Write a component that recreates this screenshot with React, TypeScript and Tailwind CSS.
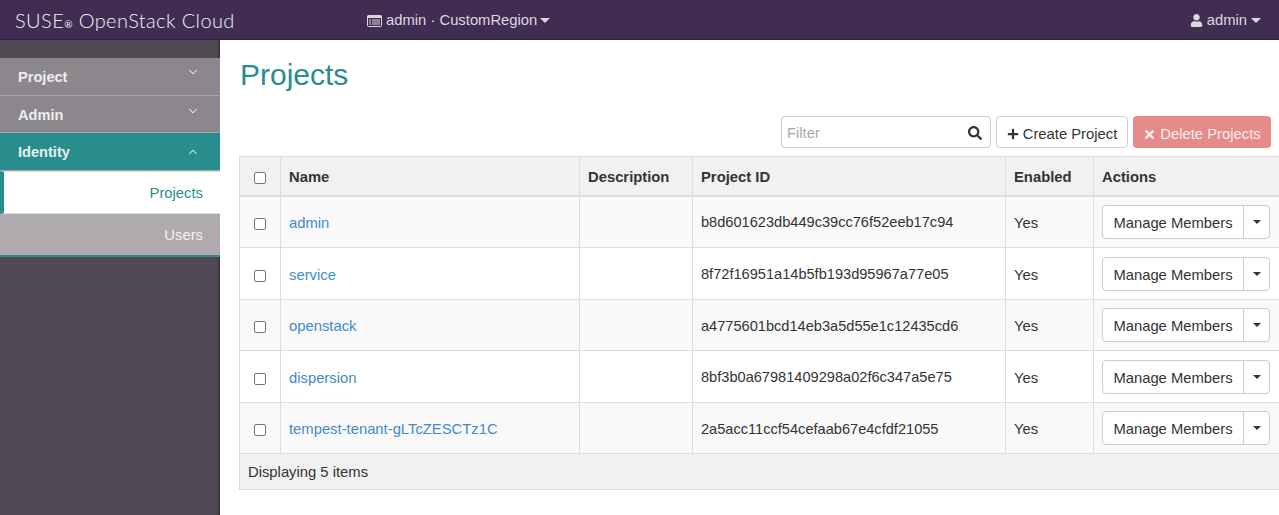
import { FaUser, FaPlus, FaTimes, FaSearch } from "react-icons/fa";
import { ChevronDown, ChevronUp } from "lucide-react";

const projects = [
  { name: "admin", id: "b8d601623db449c39cc76f52eeb17c94", rowClass: "h-[52px] bg-[#f9f9f9]" },
  { name: "service", id: "8f72f16951a14b5fb193d95967a77e05", rowClass: "h-[52px] bg-white" },
  { name: "openstack", id: "a4775601bcd14eb3a5d55e1c12435cd6", rowClass: "h-[51px] bg-[#f9f9f9]" },
  { name: "dispersion", id: "8bf3b0a67981409298a02f6c347a5e75", rowClass: "h-[52px] bg-white" },
  { name: "tempest-tenant-gLTcZESCTz1C", id: "2a5acc11ccf54cefaab67e4cfdf21055", rowClass: "h-[51px] bg-[#f9f9f9]" },
];

const NavCaret = ({ className }: { className: string }) => (
  <span className={`inline-block h-0 w-0 border-x-[5px] border-t-[5px] border-x-transparent border-t-[#dcd8df] ${className}`} />
);

const Checkbox = () => (
  <span className="mx-auto block h-3 w-3 rounded-[2px] border border-[#767676] bg-white" />
);

const RegionIcon = () => (
  <svg width="15" height="12" viewBox="0 0 15 12" className="mr-[4px] text-[#dcd8df]" fill="none">
    <rect x="0.5" y="0.5" width="14" height="11" rx="1" stroke="currentColor" />
    <rect x="0.5" y="0.5" width="14" height="2.5" fill="currentColor" />
    <path d="M2 5h2M5 5h8M2 7h2M5 7h8M2 9h2M5 9h8" stroke="currentColor" />
  </svg>
);

const TopBar = () => (
  <header className="flex h-10 shrink-0 items-center border-b border-[#2e2238] bg-[#412d52] pr-[18px] text-[#dcd8df]">
    <div className="ml-[15px] flex w-[352px] items-baseline font-['Lato',sans-serif] text-[20px] font-light leading-none tracking-[0.4px] text-[#f4f2f6]">
      SUSE<span className="text-[10px] font-normal">®</span>&nbsp;OpenStack Cloud
    </div>
    <div className="flex items-center pt-[2px] text-[14.8px]">
      <RegionIcon />
      <span>admin · CustomRegion</span>
      <NavCaret className="ml-[3px]" />
    </div>
    <div className="ml-auto flex items-center pt-[2px] text-[14.8px]">
      <FaUser className="mr-[4px] text-[13px]" />
      <span>admin</span>
      <NavCaret className="ml-[4px]" />
    </div>
  </header>
);

const Sidebar = () => (
  <aside className="w-[220px] shrink-0 bg-[#4f4a56] pt-[18px] text-[14.6px] shadow-[inset_-3px_0_3px_-2px_rgba(0,0,0,0.5)]">
    <div className="flex h-[38px] justify-between border-b border-[#aba7ac] bg-[#8b878c] pl-[18px] pr-[20px] pt-[9px] font-bold text-[#eeeeee]">
      <span>Project</span>
      <ChevronDown size={14} strokeWidth={1.75} className="-mt-[2px]" />
    </div>
    <div className="flex h-[37px] justify-between border-b border-[#a9a5aa] bg-[#8b878c] pl-[18px] pr-[20px] pt-[9px] font-bold text-[#eeeeee]">
      <span>Admin</span>
      <ChevronDown size={14} strokeWidth={1.75} className="-mt-[1px]" />
    </div>
    <div className="flex h-[38px] justify-between border-b border-[#a9a5aa] bg-[#2a8d8d] pl-[18px] pr-[20px] pt-[9px] font-bold text-[#e3f0f0]">
      <span>Identity</span>
      <ChevronUp size={14} strokeWidth={1.75} className="mt-[3px]" />
    </div>
    <div className="flex h-[43px] items-center justify-end border-y border-[#dddddd] border-l-4 border-l-[#2a8d8d] bg-white pr-[17px] pt-[2px] text-[14.8px] text-[#2a8d8d]">
      Projects
    </div>
    <div className="flex h-[43px] items-center justify-end border-b-2 border-[#2a8d8d] bg-[#aeaaae] pr-[17px] pt-[2px] text-[14.8px] font-medium text-[#f2f2f2]">
      Users
    </div>
  </aside>
);

const ProjectsTable = () => (
  <table className="w-[1040px] table-fixed border-collapse border border-[#dddddd] text-[14.8px] text-[#333333]">
    <colgroup>
      <col className="w-[41px]" />
      <col className="w-[299px]" />
      <col className="w-[113px]" />
      <col className="w-[313px]" />
      <col className="w-[88px]" />
      <col className="w-[186px]" />
    </colgroup>
    <thead>
      <tr className="h-[39px] border-b-2 border-[#dddddd] bg-[#f1f1f1] text-left font-bold">
        <th className="border-r border-[#dddddd] pt-[4px]"><Checkbox /></th>
        <th className="border-r border-[#dddddd] px-2 pt-[3px]">Name</th>
        <th className="border-r border-[#dddddd] px-2 pt-[3px]">Description</th>
        <th className="border-r border-[#dddddd] px-2 pt-[3px]">Project ID</th>
        <th className="border-r border-[#dddddd] px-2 pt-[3px]">Enabled</th>
        <th className="px-2 pt-[3px]">Actions</th>
      </tr>
    </thead>
    <tbody>
      {projects.map((project) => (
        <tr key={project.id} className={`border-b border-[#dddddd] ${project.rowClass}`}>
          <td className="border-r border-[#dddddd] pt-[4px]"><Checkbox /></td>
          <td className="border-r border-[#dddddd] px-2 pt-[3px] text-[#428bca]">{project.name}</td>
          <td className="border-r border-[#dddddd] px-2" />
          <td className="border-r border-[#dddddd] px-2 pt-[3px] text-[14.6px]">{project.id}</td>
          <td className="border-r border-[#dddddd] px-2 pt-[3px]">Yes</td>
          <td className="px-2">
            <div className="flex h-[34px] w-[168px] rounded-[4px] border border-[#cccccc] bg-white">
              <span className="flex w-[141px] items-center justify-center border-r border-[#cccccc] pt-[3px]">Manage Members</span>
              <span className="flex flex-1 items-center justify-center">
                <span className="inline-block h-0 w-0 border-x-[4px] border-t-[4px] border-x-transparent border-t-[#333333]" />
              </span>
            </div>
          </td>
        </tr>
      ))}
    </tbody>
    <tfoot>
      <tr className="h-[36px] bg-[#f1f1f1]">
        <td colSpan={6} className="px-2 pt-[2px]">Displaying 5 items</td>
      </tr>
    </tfoot>
  </table>
);

const Toolbar = () => (
  <div className="mb-2 mt-6 flex justify-end gap-[5px] pr-2 text-[14.8px]">
    <div className="flex h-8 w-[210px] items-center justify-between rounded-[4px] border border-[#cccccc] pl-[5px] pr-2">
      <span className="pt-[3px] text-[#aaaaaa]">Filter</span>
      <FaSearch className="mt-[2px] text-[14px] text-[#333333]" />
    </div>
    <div className="flex h-8 w-[132px] items-center justify-center gap-[4px] rounded-[4px] border border-[#cccccc] pt-[4px] text-[#333333]">
      <FaPlus className="text-[12px]" />
      Create Project
    </div>
    <div className="flex h-8 w-[138px] items-center justify-center gap-[4px] rounded-[4px] bg-[#e78b8a] pt-[4px] text-[#fbeeee]">
      <FaTimes className="text-[13px]" />
      Delete Projects
    </div>
  </div>
);

export default function App() {
  return (
    <div className="flex h-[515px] flex-col overflow-hidden bg-white font-['Liberation_Sans',Arial,sans-serif]">
      <TopBar />
      <div className="flex min-h-0 flex-1">
        <Sidebar />
        <main className="min-w-0 flex-1 pl-[19px]">
          <h1 className="ml-[1px] mt-[18px] text-[30px] font-normal leading-[34px] text-[#2a8d8d]">Projects</h1>
          <Toolbar />
          <ProjectsTable />
        </main>
      </div>
    </div>
  );
}
